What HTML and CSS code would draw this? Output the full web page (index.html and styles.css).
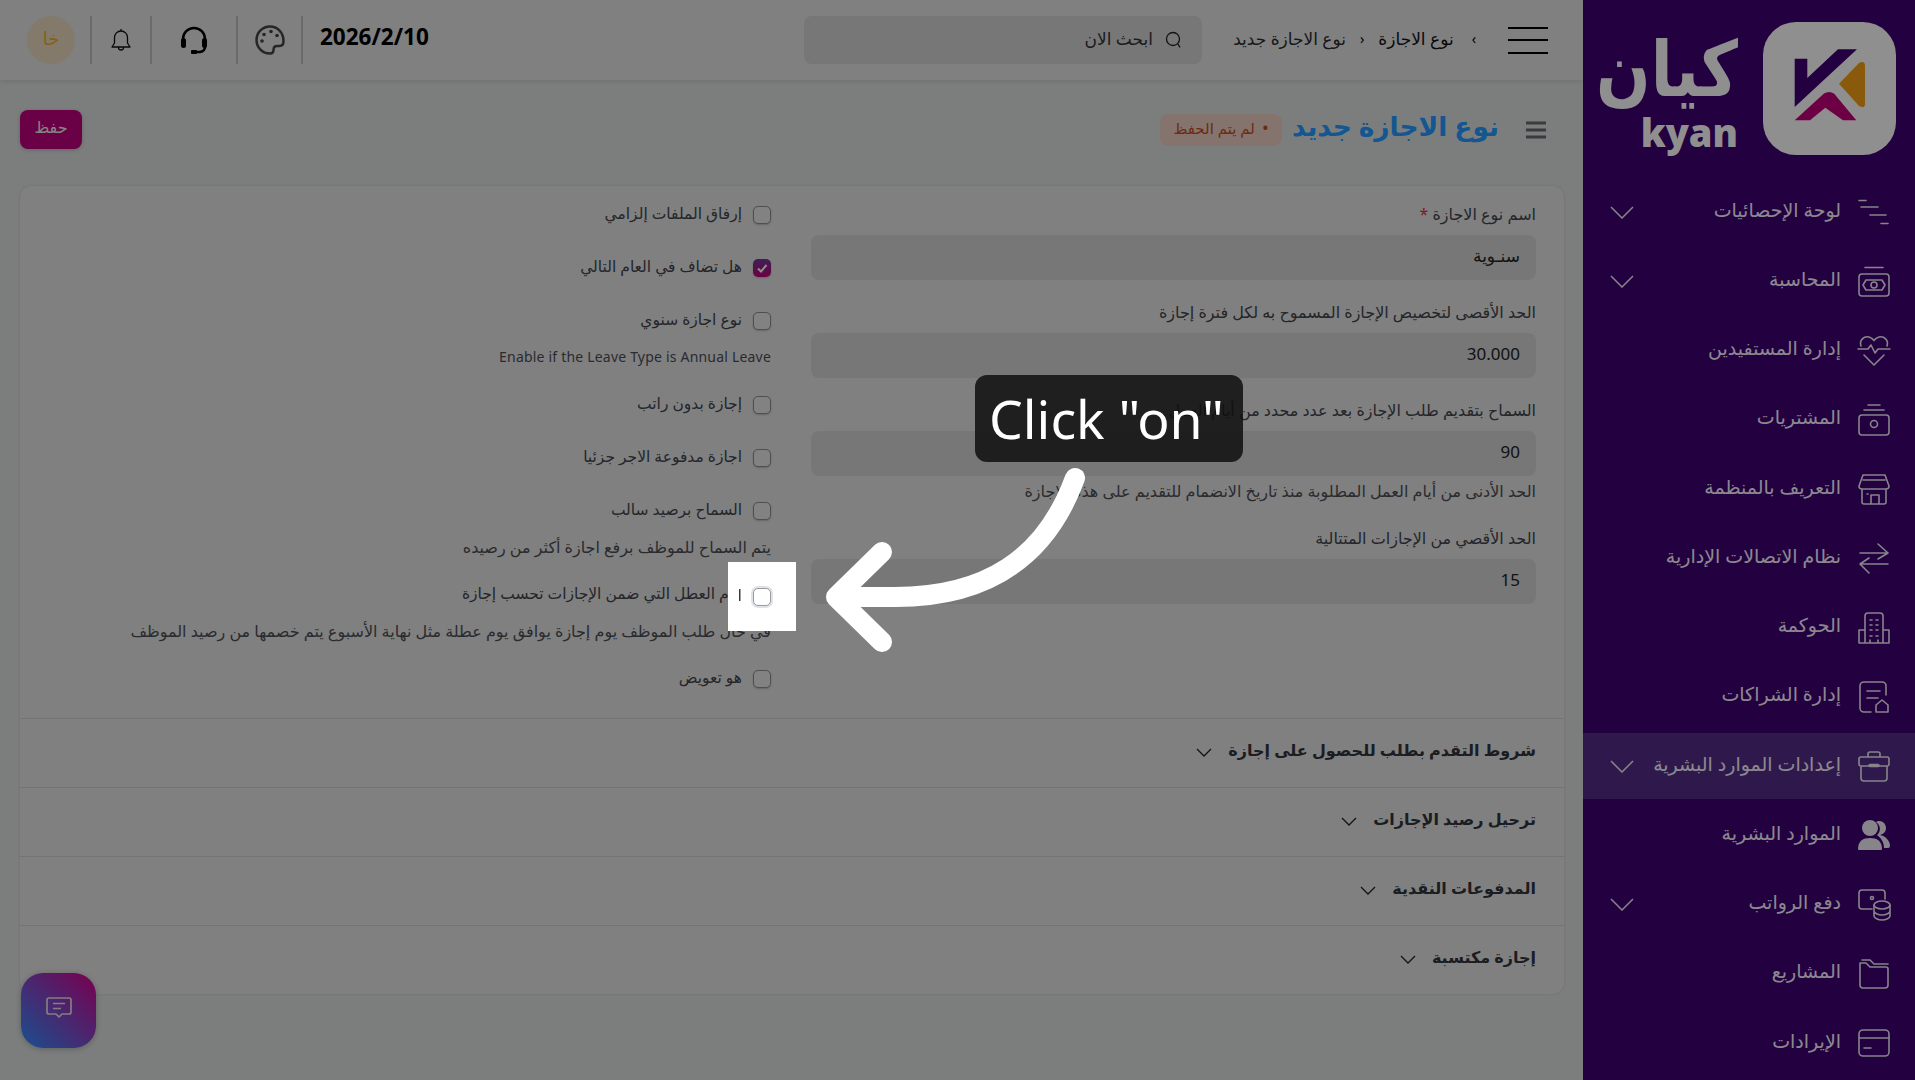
FILE: index.html
```html
<!DOCTYPE html>
<html lang="ar" dir="rtl">
<head>
<meta charset="utf-8">
<title>نوع الاجازة جديد</title>
<link rel="stylesheet" href="styles.css">
</head>
<body>
<div class="app">
  <aside class="sidebar">
    <div class="brand">
      <svg class="tile" viewBox="0 0 133 133"><rect width="133" height="133" rx="33" fill="#fff"/><path d="M31.7 36.7h12.6V56L75 27.3h19L31.7 85z" fill="#3f0072"/><path d="M76 61.7 96 41q6-3 6 3v38q0 5-6 2z" fill="#f6a116"/><path d="M31.7 98.3 61 71.5q5-3 10 0l22.300 26.800H80L62.300 85.700 47 98.300z" fill="#c3007b"/></svg>
      <div class="wordmark"><span class="word-ar">كيان</span><span class="word-en">kyan</span></div>
    </div>
    <nav class="menu">
      <a class="item"><svg class="ico" viewBox="0 0 32 32"><path d="M1 4.500h7M3 11h17M12 19h16M23 27.500h7"/></svg><span class="item-text">لوحة الإحصائيات</span><svg class="chev" viewBox="0 0 24 13"><path d="M1 1l11 11L23 1"/></svg></a>
      <a class="item"><svg class="ico" viewBox="0 0 32 32"><path d="M7 2.500h18M4 9h24M4 9a3 3 0 0 0-3 3v16a3 3 0 0 0 3 3h24a3 3 0 0 0 3-3V12a3 3 0 0 0-3-3"/><path d="M5 20l3-5h16l3 5-3 5H8z"/><circle cx="16" cy="20" r="3"/></svg><span class="item-text">المحاسبة</span><svg class="chev" viewBox="0 0 24 13"><path d="M1 1l11 11L23 1"/></svg></a>
      <a class="item"><svg class="ico" viewBox="0 0 32 32"><path d="M3 11C1 5 6 1 11 2c2 .500 4 2 5 3.500C17 4 19 2.500 21 2c5-1 10 3 8 9"/><path d="M0 14h10l3-4 4 8 3-4h12"/><path d="M6 20l10 10 10-10"/></svg><span class="item-text">إدارة المستفيدين</span></a>
      <a class="item"><svg class="ico" viewBox="0 0 32 32"><path d="M10 1h12M6 6h20"/><rect x="1" y="11" width="30" height="20" rx="3"/><circle cx="16" cy="20" r="3.500"/></svg><span class="item-text">المشتريات</span></a>
      <a class="item"><svg class="ico" viewBox="0 0 32 32"><path d="M5 2h22l4 11a3 3 0 0 1-3 3H4a3 3 0 0 1-3-3zM5 7h22M4 16v13a2 2 0 0 0 2 2h20a2 2 0 0 0 2-2V16M13 31v-9h8v9M9 21h1"/></svg><span class="item-text">التعريف بالمنظمة</span></a>
      <a class="item"><svg class="ico" viewBox="0 0 32 32"><path d="M2 11h28L20 2M30 11l-10 6M30 22H2l9-6M2 22l9 9"/></svg><span class="item-text">نظام الاتصالات الإدارية</span></a>
      <a class="item"><svg class="ico" viewBox="0 0 32 32"><path d="M7 31V4a3 3 0 0 1 3-3h12a3 3 0 0 1 3 3v27M7 18H1v13h30V18h-6M12 8h2M18 8h2M12 13h2M18 13h2M12 18h2M18 18h2M12 24h2M18 24h2M12 31v-3M20 31v-3"/></svg><span class="item-text">الحوكمة</span></a>
      <a class="item"><svg class="ico" viewBox="0 0 32 32"><path d="M13 31H6a4 4 0 0 1-4-4V5a4 4 0 0 1 4-4h18a4 4 0 0 1 4 4v9M9 10h13M9 17h11"/><path d="M18 24l6-5 6 5v7H18z"/></svg><span class="item-text">إدارة الشراكات</span></a>
      <a class="item active"><svg class="ico" viewBox="0 0 32 32"><path d="M10 7V4a2 2 0 0 1 2-2h8a2 2 0 0 1 2 2v3M3 7h26a2 2 0 0 1 2 2v5a2 2 0 0 1-2 2H3a2 2 0 0 1-2-2V9a2 2 0 0 1 2-2zM3 17v11a3 3 0 0 0 3 3h20a3 3 0 0 0 3-3V17"/><path d="M12 15.500h8" class="thick"/></svg><span class="item-text">إعدادات الموارد البشرية</span><svg class="chev" viewBox="0 0 24 13"><path d="M1 1l11 11L23 1"/></svg></a>
      <a class="item"><svg class="ico fill" viewBox="0 0 32 32"><circle cx="12" cy="9" r="8"/><path d="M0 30c0-8 5-11 12-11s12 3 12 11q0 1-1 1H1q-1 0-1-1z"/><path d="M20 2a7 7 0 0 1 2 14c5 1 10 5 10 11q0 2-2 2h-4c0-6-3-10-7-13a8 8 0 0 0-1-13z"/></svg><span class="item-text">الموارد البشرية</span></a>
      <a class="item"><svg class="ico" viewBox="0 0 32 32"><path d="M14 20H4a3 3 0 0 1-3-3V4a3 3 0 0 1 3-3h20a3 3 0 0 1 3 3v6"/><circle cx="14" cy="9" r="1.500"/><ellipse cx="24" cy="16" rx="8" ry="4"/><path d="M16 16v11c0 2 4 4 8 4s8-2 8-4V16M16 22c0 2 4 4 8 4s8-2 8-4"/></svg><span class="item-text">دفع الرواتب</span><svg class="chev" viewBox="0 0 24 13"><path d="M1 1l11 11L23 1"/></svg></a>
      <a class="item"><svg class="ico" viewBox="0 0 32 32"><path d="M2 11v16a3 3 0 0 0 3 3h22a3 3 0 0 0 3-3V11a2 2 0 0 0-2-2H12L8 5H2v6M4 2h8l4 4h14"/></svg><span class="item-text">المشاريع</span></a>
      <a class="item"><svg class="ico" viewBox="0 0 32 32"><rect x="1" y="3" width="30" height="26" rx="4"/><path d="M1 11h30M6 21h7"/></svg><span class="item-text">الإيرادات</span></a>
    </nav>
  </aside>

  <div class="main">
    <header class="topbar">
      <button class="burger"><i></i><i></i><i></i></button>
      <div class="crumbs"><span class="sep-c">›</span><span class="crumb-a">نوع الاجازة</span><span class="sep-c">‹</span><span>نوع الاجازة جديد</span></div>
      <div class="search"><svg class="search-ico" viewBox="0 0 18 18"><circle cx="9" cy="8" r="6.500"/><path d="M14 13l2 3.500"/></svg><span>ابحث الان</span></div>
      <div class="tools">
        <span class="date">2026/2/10</span>
        <span class="tool t-pal"><svg width="30" height="30" viewBox="0 0 30 30"><path class="pal" d="M15 1.500C7.500 1.500 1.500 7.500 1.500 15S7.500 28.500 15 28.500c2.500 0 3.500-1.500 3.500-3.500 0-2.500 1-4 3.500-4h2.500c2.500 0 4-2 4-5C28.500 7.500 22.500 1.500 15 1.500z"/><circle cx="9" cy="9.500" r="1.800"/><circle cx="16" cy="6.500" r="1.800"/><circle cx="22" cy="10.500" r="1.800"/><circle cx="7" cy="16" r="1.800"/></svg></span>
        <span class="tool t-head"><svg width="28" height="28" viewBox="0 0 28 28"><path class="hs" d="M3 16V13a11 11 0 0 1 22 0v3"/><rect x="1" y="12" width="5" height="10" rx="2.500"/><rect x="22" y="12" width="5" height="10" rx="2.500"/><path class="hs" d="M25 21q0 4-5 5h-6"/><rect x="11" y="24" width="6" height="4" rx="1"/></svg></span>
        <span class="tool t-bell"><svg width="20" height="24" viewBox="0 0 20 24"><path class="bl" d="M1 19h18l-2.500-4V9.500a6.500 6.500 0 0 0-13 0V15zM7.500 19.500a2.500 2.500 0 0 0 5 0M10 3V1"/></svg></span>
        <span class="avatar">خا</span>
      </div>
    </header>

    <div class="page-head">
      <svg class="list-ico" viewBox="0 0 20 18"><path d="M0 2h20M0 9h20M0 16h20"/></svg>
      <h1 class="title">نوع الاجازة جديد</h1>
      <span class="badge"><b>•</b> لم يتم الحفظ</span>
      <button class="save">حفظ</button>
    </div>

    <section class="card">
      <div class="form-grid">
        <div class="col">
          <label class="f-label">اسم نوع الاجازة <em>*</em></label>
          <div class="input">سنـوية</div>
          <label class="f-label">الحد الأقصى لتخصيص الإجازة المسموح به لكل فترة إجازة</label>
          <div class="input">30.000</div>
          <label class="f-label">السماح بتقديم طلب الإجازة بعد عدد محدد من أيام العمل</label>
          <div class="input">90</div>
          <p class="hint hint-f">الحد الأدنى من أيام العمل المطلوبة منذ تاريخ الانضمام للتقديم على هذه الإجازة</p>
          <label class="f-label">الحد الأقصي من الإجازات المتتالية</label>
          <div class="input">15</div>
        </div>
        <div class="col col-checks">
          <div class="check-row"><span class="box"></span><span class="check-text">إرفاق الملفات إلزامي</span></div>
          <div class="check-row"><span class="box on"><svg viewBox="0 0 18 18"><path d="M5 9.500l3 3 5.500-6.500"/></svg></span><span class="check-text">هل تضاف في العام التالي</span></div>
          <div class="check-row"><span class="box"></span><span class="check-text">نوع اجازة سنوي</span></div>
          <p class="hint hint-en">Enable if the Leave Type is Annual Leave</p>
          <div class="check-row"><span class="box"></span><span class="check-text">إجازة بدون راتب</span></div>
          <div class="check-row"><span class="box"></span><span class="check-text">اجازة مدفوعة الاجر جزئيا</span></div>
          <div class="check-row"><span class="box"></span><span class="check-text">السماح برصيد سالب</span></div>
          <p class="hint">يتم السماح للموظف برفع اجازة أكثر من رصيده</p>
          <div class="check-row"><span class="box"></span><span class="check-text">أيام العطل التي ضمن الإجازات تحسب إجازة</span></div>
          <p class="hint">في حال طلب الموظف يوم إجازة يوافق يوم عطلة مثل نهاية الأسبوع يتم خصمها من رصيد الموظف</p>
          <div class="check-row last"><span class="box"></span><span class="check-text">هو تعويض</span></div>
        </div>
      </div>
      <div class="acc"><span class="acc-text">شروط التقدم بطلب للحصول على إجازة</span><svg viewBox="0 0 16 10"><path d="M1 1l7 7 7-7"/></svg></div>
      <div class="acc"><span class="acc-text">ترحيل رصيد الإجازات</span><svg viewBox="0 0 16 10"><path d="M1 1l7 7 7-7"/></svg></div>
      <div class="acc"><span class="acc-text">المدفوعات النقدية</span><svg viewBox="0 0 16 10"><path d="M1 1l7 7 7-7"/></svg></div>
      <div class="acc"><span class="acc-text">إجازة مكتسبة</span><svg viewBox="0 0 16 10"><path d="M1 1l7 7 7-7"/></svg></div>
    </section>
  </div>
</div>

<button class="chat"><svg viewBox="0 0 26 24"><path d="M3 2h20a2 2 0 0 1 2 2v12a2 2 0 0 1-2 2h-7l-3 3-3-3H3a2 2 0 0 1-2-2V4a2 2 0 0 1 2-2zM7 7.500h12M7 12.500h8"/></svg></button>

<div class="spot"><span class="box ring"></span><span class="spot-letter">ا</span></div>

<div class="tip" dir="ltr">Click "on"</div>
<svg class="arrow" viewBox="0 0 1915 1080"><path d="M1075 478C1045 560 985 597 895 597H838M882 552L836 597L882 642"/></svg>
</body>
</html>
```

FILE: styles.css
```css
* { box-sizing: border-box; }
html, body { margin: 0; height: 100%; overflow: hidden; }
body { font-family: "Noto Sans", "DejaVu Sans", sans-serif; background: #dde1df; color: #42444c; }
svg { display: block; }
p, h1 { margin: 0; }

.app { display: flex; height: 1080px; }

.sidebar { width: 332px; flex: none; background: #3f0072; color: #f8f4ff; overflow: hidden; }
.brand { height: 179px; padding: 22px 19px 0 0; display: flex; align-items: flex-start; gap: 25px; }
.tile { width: 133px; height: 133px; flex: none; }
.wordmark { display: flex; flex-direction: column; align-items: flex-start; color: #fff; }
.word-ar { font-size: 64px; font-weight: 700; line-height: 78px; margin-top: 6px; transform: scaleY(1.2); }
.word-en { font-family: "Open Sans", sans-serif; font-weight: 800; font-size: 38px; line-height: 36px; margin-top: 8px; }

.menu { display: flex; flex-direction: column; gap: 3.25px; }
.item { height: 66px; display: flex; align-items: center; padding: 0 25px 0 27px; gap: 17px; font-size: 19px; flex: none; }
.item-text { padding-bottom: 5px; }
.item.active { background: #552e88; }
.ico { width: 32px; height: 32px; flex: none; fill: none; stroke: #f0ecf6; stroke-width: 1.6; stroke-linecap: round; stroke-linejoin: round; overflow: visible; }
.ico.fill { fill: #f0ecf6; stroke: none; }
.ico .thick { stroke-width: 3.500; }
.chev { width: 24px; height: 13px; margin-right: auto; fill: none; stroke: #f0ecf6; stroke-width: 1.500; }

.main { flex: 1; min-width: 0; }
.topbar { height: 80px; background: #e4e4e4; display: flex; align-items: center; padding-right: 35px; box-shadow: 0 1px 6px rgba(0, 0, 0, .12); }
.burger { width: 40px; height: 27px; padding: 0; border: 0; background: none; display: flex; flex-direction: column; justify-content: space-between; flex: none; }
.burger i { display: block; height: 2px; background: #000; }
.crumbs { width: 306px; flex: none; padding: 0 32px 4px 0; display: flex; align-items: center; gap: 14px; font-size: 17px; color: #2c2c2c; white-space: nowrap; }
.crumb-a { color: #111; }
.sep-c { font-size: 14px; color: #000; }
.sep-c:first-child { margin-left: 4px; }
.search { width: 398px; height: 48px; background: #d4d4d4; border-radius: 8px; display: flex; align-items: center; padding-right: 20px; gap: 11px; font-size: 17px; color: #333; }
.search span { padding-bottom: 4px; }
.search-ico { width: 18px; height: 18px; fill: none; stroke: #222; stroke-width: 1.300; }
.tools { margin-right: auto; display: flex; align-items: center; padding-left: 27px; }
.date { font-size: 22.500px; font-weight: 700; color: #000; line-height: 42px; margin-left: 17px; height: 48px; direction: ltr; }
.tool { height: 48px; display: flex; align-items: center; justify-content: center; border-right: 2px solid #bdbdbd; }
.t-pal { width: 65px; }
.t-head { width: 86px; }
.t-bell { width: 62px; border-left: 2px solid #bdbdbd; }
.pal { fill: none; stroke: #444; stroke-width: 2.500; }
.t-pal circle { fill: #444; }
.t-head rect { fill: #000; }
.hs { fill: none; stroke: #000; stroke-width: 2.500; }
.bl { fill: none; stroke: #111; stroke-width: 1.300; stroke-linejoin: round; }
.avatar { width: 48px; height: 48px; margin-right: 15px; padding-bottom: 5px; border-radius: 50%; background: #eadac0; color: #efae1e; display: flex; align-items: center; justify-content: center; font-size: 18px; }

.page-head { height: 39px; margin: 30px 37px 37px 20px; display: flex; align-items: center; }
.list-ico { width: 20px; height: 18px; flex: none; fill: none; stroke: #666a70; stroke-width: 3; margin-left: 27px; }
.title { font-size: 26.500px; font-weight: 700; color: #2599ff; line-height: 40px; margin: -7px 0 0 10px; }
.badge { height: 32px; padding: 0 14px 4px; background: #eecdc4; border-radius: 8px; display: flex; align-items: center; gap: 8px; font-size: 15px; color: #bf4d1d; }
.badge b { font-size: 14px; }
.save { margin-right: auto; width: 62px; height: 39px; border: 0; border-radius: 8px; background: #bd007b; color: #eee; font: inherit; font-size: 16px; padding: 0 0 6px; box-shadow: 0 1px 4px rgba(0, 0, 0, .2); }

.card { margin: 0 19px 0 20px; background: #e4e4e4; border-radius: 12px; box-shadow: 0 0 3px rgba(0, 0, 0, .12); }
.form-grid { display: grid; grid-template-columns: 725px 1fr; column-gap: 40px; padding: 17px 28px 27px; height: 532px; }
.col { min-width: 0; }
.f-label { display: block; height: 22px; line-height: 22px; margin-bottom: 10px; font-size: 16px; white-space: nowrap; }
.f-label em { color: #d33; font-style: normal; }
.input { height: 45px; margin-bottom: 21px; background: #d4d4d4; border-radius: 8px; padding: 0 16px; line-height: 42px; font-size: 17px; color: #222; }
.hint { height: 20px; line-height: 20px; margin: -16px 0 27px; font-size: 16px; color: #4c4e55; white-space: nowrap; }
.hint-f { margin-bottom: 26px; }
.hint-en { direction: ltr; text-align: right; font-size: 14px; letter-spacing: .2px; }
.col-checks { padding-top: 1px; }
.check-row { height: 22px; margin-bottom: 31px; display: flex; align-items: center; gap: 11px; font-size: 15.500px; line-height: 22px; }
.check-text { margin-top: -4px; }
.check-row.last { margin-bottom: 0; }
.box { width: 18px; height: 18px; flex: none; background: #e8e8e8; border: 1px solid #8d8d8d; border-radius: 5px; box-shadow: 0 1px 2px rgba(0, 0, 0, .2); display: block; }
.box.on { background: linear-gradient(180deg, #6e3a94, #c3007b); border: 0; }
.box.on svg { fill: none; stroke: #fff; stroke-width: 2; }

.acc { height: 69px; border-top: 1px solid #cfcfcf; padding: 0 28px; display: flex; align-items: center; gap: 16px; font-size: 16px; font-weight: 700; color: #33353c; }
.acc-text { margin-top: -6px; }
.acc svg { width: 16px; height: 10px; fill: none; stroke: #222; stroke-width: 1.300; }

.chat { position: fixed; left: 21px; top: 973px; width: 75px; height: 75px; padding: 0 0 6px; border: 0; border-radius: 22px; background: linear-gradient(45deg, #2f8dff, #d6008f); display: flex; align-items: center; justify-content: center; box-shadow: 0 1px 6px rgba(0, 0, 0, .25); }
.chat svg { width: 26px; height: 24px; fill: none; stroke: #e4e4e4; stroke-width: 1.700; stroke-linejoin: round; }

.spot { position: fixed; left: 728px; top: 562px; width: 68px; height: 69px; background: #fff; box-shadow: 0 0 0 3000px rgba(0, 0, 0, .44); display: flex; align-items: center; padding-right: 25px; gap: 11px; font-size: 16px; color: #333; }
.spot-letter { line-height: 22px; margin-top: -4px; }
.box.ring { background: #fff; border-color: #999; box-shadow: 0 0 0 2px #dfe3e8; }

.tip { position: fixed; left: 975px; top: 375px; width: 268px; height: 87px; background: rgba(14, 14, 14, .85); border-radius: 12px; color: #fff; font-family: "Noto Sans", sans-serif; font-size: 53.500px; line-height: 87px; padding-left: 14px; white-space: nowrap; }
.arrow { position: fixed; left: 0; top: 0; width: 1915px; height: 1080px; fill: none; stroke: #fff; stroke-width: 20; stroke-linecap: round; stroke-linejoin: round; pointer-events: none; }
```
